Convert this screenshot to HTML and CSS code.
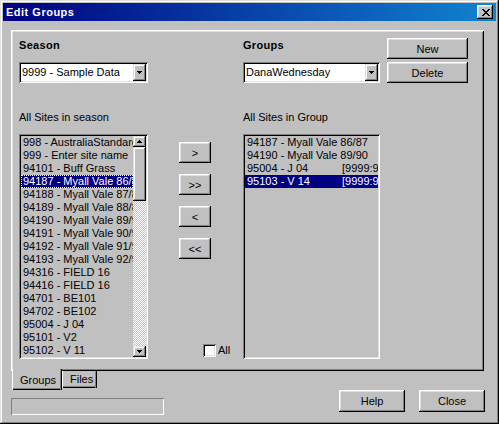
FILE: index.html
```html
<!DOCTYPE html>
<html>
<head>
<meta charset="utf-8">
<title>Edit Groups</title>
<link rel="stylesheet" href="styles.css">
</head>
<body>
<div class="window">
  <div class="titlebar">
    <span class="title">Edit Groups</span>
    <div class="tb-close">
      <svg width="8" height="7" viewBox="0 0 8 7" shape-rendering="crispEdges"><path d="M0 0h2v1H0zM6 0h2v1H6zM1 1h2v1H1zM5 1h2v1H5zM2 2h4v1H2zM3 3h2v1H3zM2 4h4v1H2zM1 5h2v1H1zM5 5h2v1H5zM0 6h2v1H0zM6 6h2v1H6z" fill="#000"/></svg>
    </div>
  </div>

  <div class="panel">
    <div class="col col-left">
      <div class="lbl-bold">Season</div>
      <div class="combo">
        <span class="combo-text">9999 - Sample Data</span>
        <span class="combo-btn"><svg width="5" height="3" viewBox="0 0 5 3" shape-rendering="crispEdges"><path d="M0 0h5v1H0zM1 1h3v1H1zM2 2h1v1H2z" fill="#000"/></svg></span>
      </div>
      <div class="lbl">All Sites in season</div>
      <div class="list">
        <div class="rows">
          <div class="row">998 - AustraliaStandard</div>
          <div class="row">999 - Enter site name</div>
          <div class="row">94101 - Buff Grass</div>
          <div class="row row-sel row-focus">94187 - Myall Vale 86/87</div>
          <div class="row">94188 - Myall Vale 87/88</div>
          <div class="row">94189 - Myall Vale 88/89</div>
          <div class="row">94190 - Myall Vale 89/90</div>
          <div class="row">94191 - Myall Vale 90/91</div>
          <div class="row">94192 - Myall Vale 91/92</div>
          <div class="row">94193 - Myall Vale 92/93</div>
          <div class="row">94316 - FIELD 16</div>
          <div class="row">94416 - FIELD 16</div>
          <div class="row">94701 - BE101</div>
          <div class="row">94702 - BE102</div>
          <div class="row">95004 - J 04</div>
          <div class="row">95101 - V2</div>
          <div class="row">95102 - V 11</div>
        </div>
        <div class="scrollbar">
          <div class="sb-btn sb-up"><svg width="5" height="3" viewBox="0 0 5 3" shape-rendering="crispEdges"><path d="M2 0h1v1H2zM1 1h3v1H1zM0 2h5v1H0z" fill="#000"/></svg></div>
          <div class="sb-thumb"></div>
          <div class="sb-track">
            <svg class="dither" width="13" height="100%" shape-rendering="crispEdges">
              <defs>
                <pattern id="dither" width="2" height="2" patternUnits="userSpaceOnUse">
                  <rect width="2" height="2" fill="#c0c0c0"/>
                  <rect width="1" height="1" fill="#ffffff"/>
                  <rect x="1" y="1" width="1" height="1" fill="#ffffff"/>
                </pattern>
              </defs>
              <rect width="100%" height="100%" fill="url(#dither)"/>
            </svg>
          </div>
          <div class="sb-btn sb-down"><svg width="5" height="3" viewBox="0 0 5 3" shape-rendering="crispEdges"><path d="M0 0h5v1H0zM1 1h3v1H1zM2 2h1v1H2z" fill="#000"/></svg></div>
        </div>
      </div>
    </div>

    <div class="col col-mid">
      <button class="btn btn-move">&gt;</button>
      <button class="btn btn-move">&gt;&gt;</button>
      <button class="btn btn-move">&lt;</button>
      <button class="btn btn-move">&lt;&lt;</button>
      <label class="check"><span class="check-box"></span><span>All</span></label>
    </div>

    <div class="col col-right">
      <div class="lbl-bold">Groups</div>
      <div class="combo">
        <span class="combo-text">DanaWednesday</span>
        <span class="combo-btn"><svg width="5" height="3" viewBox="0 0 5 3" shape-rendering="crispEdges"><path d="M0 0h5v1H0zM1 1h3v1H1zM2 2h1v1H2z" fill="#000"/></svg></span>
      </div>
      <div class="lbl">All Sites in Group</div>
      <div class="list list-group">
        <div class="rows">
          <div class="row">94187 - Myall Vale 86/87</div>
          <div class="row">94190 - Myall Vale 89/90</div>
          <div class="row row-tab"><span class="name">95004 - J 04</span><span class="tag">[9999:9999]</span></div>
          <div class="row row-tab row-sel"><span class="name">95103 - V 14</span><span class="tag">[9999:9999]</span></div>
        </div>
      </div>
    </div>

    <div class="col col-actions">
      <button class="btn btn-act">New</button>
      <button class="btn btn-act btn-delete">Delete</button>
    </div>
  </div>

  <div class="footer">
    <div class="footer-left">
      <div class="tabs">
        <div class="tab tab-active">Groups</div>
        <div class="tab tab-files">Files</div>
      </div>
      <div class="status"></div>
    </div>
    <div class="footer-buttons">
      <button class="btn btn-foot">Help</button>
      <button class="btn btn-foot">Close</button>
    </div>
  </div>
</div>
</body>
</html>
```

FILE: styles.css
```css
* { box-sizing: border-box; }

body {
  margin: 0;
  background: #c0c0c0;
  font-family: "Liberation Sans", Arial, sans-serif;
  font-size: 11px;
  color: #000;
}

.window {
  width: 499px;
  height: 424px;
  padding: 3px;
  background: #c0c0c0;
  display: flex;
  flex-direction: column;
  box-shadow: inset -1px -1px #000, inset 1px 1px #dfdfdf, inset -2px -2px #808080, inset 2px 2px #fff;
}

/* title bar */
.titlebar {
  flex: none;
  height: 18px;
  display: flex;
  align-items: center;
  justify-content: space-between;
  padding: 0 3px;
  background: linear-gradient(to right, #000080, #1084d0);
}
.title {
  color: #fff;
  font-weight: bold;
  font-size: 11px;
  letter-spacing: 0.5px;
  line-height: 18px;
}
.tb-close {
  width: 16px;
  height: 14px;
  padding-left: 1px;
  display: flex;
  align-items: center;
  justify-content: center;
  background: #c0c0c0;
  box-shadow: inset -1px -1px #000, inset 1px 1px #fff, inset -2px -2px #808080, inset 2px 2px #dfdfdf;
}

/* tab page */
.panel {
  flex: none;
  height: 341px;
  margin: 9px 12px 0 8px;
  padding: 8px 0 0 8px;
  display: grid;
  grid-template-columns: 129px 95px 137px 7px 81px;
  align-content: start;
  box-shadow: inset 1px 1px #fff, inset -1px -1px #000, inset 2px 2px #dfdfdf, inset -2px -2px #808080;
}
.col {
  display: flex;
  flex-direction: column;
}
.col-actions { grid-column: 5; }

.lbl-bold {
  height: 14px;
  line-height: 14px;
  font-weight: bold;
  letter-spacing: 0.3px;
}
.lbl {
  height: 14px;
  line-height: 14px;
  margin-top: 27px;
  white-space: nowrap;
}

/* combo box */
.combo {
  margin-top: 10px;
  height: 21px;
  padding: 2px;
  display: flex;
  background: #fff;
  box-shadow: inset 1px 1px #808080, inset -1px -1px #fff, inset 2px 2px #000, inset -2px -2px #dfdfdf;
}
.combo-text {
  flex: 1;
  padding-left: 1px;
  line-height: 17px;
  white-space: nowrap;
  overflow: hidden;
}
.combo-btn {
  width: 13px;
  height: 17px;
  display: flex;
  align-items: center;
  justify-content: center;
  background: #c0c0c0;
  box-shadow: inset -1px -1px #000, inset 1px 1px #dfdfdf, inset -2px -2px #808080, inset 2px 2px #fff;
}

/* list boxes */
.list {
  margin-top: 10px;
  height: 225px;
  padding: 2px;
  display: flex;
  background: #c0c0c0;
  box-shadow: inset 1px 1px #808080, inset -1px -1px #fff, inset 2px 2px #000, inset -2px -2px #dfdfdf;
}
.rows {
  flex: 1;
  min-width: 0;
  overflow: hidden;
}
.row {
  height: 13px;
  line-height: 13px;
  padding-left: 2px;
  white-space: nowrap;
  overflow: hidden;
}
.row-sel {
  background: #000080;
  color: #fff;
}
.row-focus {
  outline: 1px dotted #ffff99;
  outline-offset: -1px;
}
.row-tab { display: flex; }
.row-tab .name { flex: none; width: 95px; }
.row-tab .tag { flex: none; }

/* scrollbar */
.scrollbar {
  flex: none;
  width: 13px;
  display: flex;
  flex-direction: column;
}
.sb-btn, .sb-thumb {
  flex: none;
  background: #c0c0c0;
  box-shadow: inset -1px -1px #000, inset 1px 1px #dfdfdf, inset -2px -2px #808080, inset 2px 2px #fff;
}
.sb-btn {
  height: 11px;
  display: flex;
  align-items: center;
  justify-content: center;
}
.sb-thumb { height: 54px; }
.sb-track {
  flex: 1;
  overflow: hidden;
  display: flex;
}
.dither { display: block; }

/* buttons */
.btn {
  font: inherit;
  color: #000;
  border: 0;
  padding: 0;
  margin: 0;
  background: #c0c0c0;
  display: flex;
  align-items: center;
  justify-content: center;
  box-shadow: inset -1px -1px #000, inset 1px 1px #fff, inset -2px -2px #808080, inset 2px 2px #dfdfdf;
}
.col-mid { padding-top: 104px; }
.btn-move {
  width: 32px;
  height: 21px;
  margin-left: 31px;
  margin-bottom: 11px;
}
.btn-act {
  width: 81px;
  height: 21px;
}
.btn-delete { margin-top: 3px; }

.check {
  margin-top: auto;
  margin-bottom: 2px;
  margin-left: 55px;
  height: 13px;
  line-height: 13px;
  display: flex;
  align-items: center;
  gap: 2px;
}
.check-box {
  width: 13px;
  height: 13px;
  background: #fff;
  box-shadow: inset 1px 1px #808080, inset -1px -1px #fff, inset 2px 2px #000, inset -2px -2px #dfdfdf;
}

/* footer */
.footer {
  flex: 1;
  display: flex;
  justify-content: space-between;
}
.footer-left {
  display: flex;
  flex-direction: column;
}
.tabs {
  display: flex;
  align-items: flex-start;
  margin-top: -2px;
  margin-left: 9px;
}
.tab {
  line-height: 13px;
  background: #c0c0c0;
}
.tab-active {
  width: 50px;
  height: 21px;
  padding: 5px 0 0 8px;
  box-shadow: inset 1px 0 #fff, inset -1px 0 #000, inset -2px 0 #808080, inset 0 -1px #000, inset 0 -2px #808080;
}
.tab-files {
  width: 35px;
  height: 17px;
  margin-top: 2px;
  padding: 2px 0 0 8px;
  box-shadow: inset 1px 0 #fff, inset -1px 0 #000, inset -2px 0 #808080, inset 0 -1px #000, inset 0 -2px #808080;
}
.status {
  width: 153px;
  height: 17px;
  margin: 8px 0 0 8px;
  box-shadow: inset 1px 1px #808080, inset -1px -1px #fff;
}
.footer-buttons {
  display: flex;
  align-items: flex-start;
  gap: 14px;
  margin: 19px 11px 0 0;
}
.btn-foot {
  width: 66px;
  height: 22px;
}
```
